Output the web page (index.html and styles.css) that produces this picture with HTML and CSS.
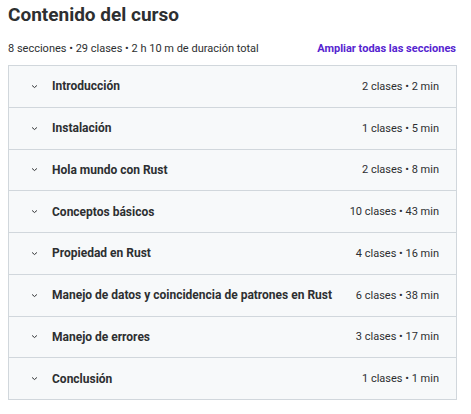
FILE: index.html
```html
<!doctype html>
<html lang="es">

<head>
    <meta charset="utf-8">
    <meta name="viewport" content="width=device-width, initial-scale=1">
    <title>Contenido del curso</title>
    <link rel="stylesheet" href="styles.css">
</head>

<body>
    <div class="curriculum">
        <h2 class="curriculum_title">Contenido del curso</h2>

        <div class="curriculum_header">
            <span class="curriculum_stats">8 secciones • 29 clases • 2 h 10 m de duración total</span>
            <button class="expand_all">Ampliar todas las secciones</button>
        </div>

        <div class="sections">
            <div class="section">
                <svg class="chevron" viewBox="0 0 10 6"><path d="M1.5 1.5 L5 4.5 L8.5 1.5" /></svg>
                <span class="section_title">Introducción</span>
                <span class="section_meta">2 clases • 2 min</span>
            </div>
            <div class="section">
                <svg class="chevron" viewBox="0 0 10 6"><path d="M1.5 1.5 L5 4.5 L8.5 1.5" /></svg>
                <span class="section_title">Instalación</span>
                <span class="section_meta">1 clases • 5 min</span>
            </div>
            <div class="section">
                <svg class="chevron" viewBox="0 0 10 6"><path d="M1.5 1.5 L5 4.5 L8.5 1.5" /></svg>
                <span class="section_title">Hola mundo con Rust</span>
                <span class="section_meta">2 clases • 8 min</span>
            </div>
            <div class="section">
                <svg class="chevron" viewBox="0 0 10 6"><path d="M1.5 1.5 L5 4.5 L8.5 1.5" /></svg>
                <span class="section_title">Conceptos básicos</span>
                <span class="section_meta">10 clases • 43 min</span>
            </div>
            <div class="section">
                <svg class="chevron" viewBox="0 0 10 6"><path d="M1.5 1.5 L5 4.5 L8.5 1.5" /></svg>
                <span class="section_title">Propiedad en Rust</span>
                <span class="section_meta">4 clases • 16 min</span>
            </div>
            <div class="section">
                <svg class="chevron" viewBox="0 0 10 6"><path d="M1.5 1.5 L5 4.5 L8.5 1.5" /></svg>
                <span class="section_title">Manejo de datos y coincidencia de patrones en Rust</span>
                <span class="section_meta">6 clases • 38 min</span>
            </div>
            <div class="section">
                <svg class="chevron" viewBox="0 0 10 6"><path d="M1.5 1.5 L5 4.5 L8.5 1.5" /></svg>
                <span class="section_title">Manejo de errores</span>
                <span class="section_meta">3 clases • 17 min</span>
            </div>
            <div class="section">
                <svg class="chevron" viewBox="0 0 10 6"><path d="M1.5 1.5 L5 4.5 L8.5 1.5" /></svg>
                <span class="section_title">Conclusión</span>
                <span class="section_meta">1 clases • 1 min</span>
            </div>
        </div>
    </div>
</body>

</html>
```

FILE: styles.css
```css
/* Course curriculum block */
body {
    font-family: Roboto, "Noto Sans", sans-serif;
    background-color: white;
    color: #2d2f31;
    margin: 0;
    padding: 0;
}

.curriculum {
    width: 449px;
    padding: 0 0 0 8px;
}

.curriculum_title {
    font-size: 19px;
    font-weight: 700;
    margin: 0;
    padding-top: 3px;
    line-height: 24px;
}

.curriculum_header {
    display: flex;
    justify-content: space-between;
    align-items: center;
    margin-top: 15px;
    margin-bottom: 10px;
}

.curriculum_stats {
    font-size: 11px;
}

.expand_all {
    font-family: inherit;
    font-size: 11px;
    font-weight: 700;
    color: #5624d0;
    background: none;
    border: none;
    padding: 0 1px 0 0;
    cursor: pointer;
}

.sections {
    border: 1px solid #d1d7dc;
    border-bottom: none;
}

.section {
    display: flex;
    align-items: center;
    height: 40.75px;
    padding: 0 17px 0 22px;
    background-color: #f7f9fa;
    border-bottom: 1px solid #d1d7dc;
}

.chevron {
    width: 7px;
    height: 5px;
    fill: none;
    stroke: #2d2f31;
    stroke-width: 1.4;
    margin-right: 14px;
}

.section_title {
    flex: 1;
    font-size: 12px;
    font-weight: 700;
}

.section_meta {
    font-size: 11px;
}
```
